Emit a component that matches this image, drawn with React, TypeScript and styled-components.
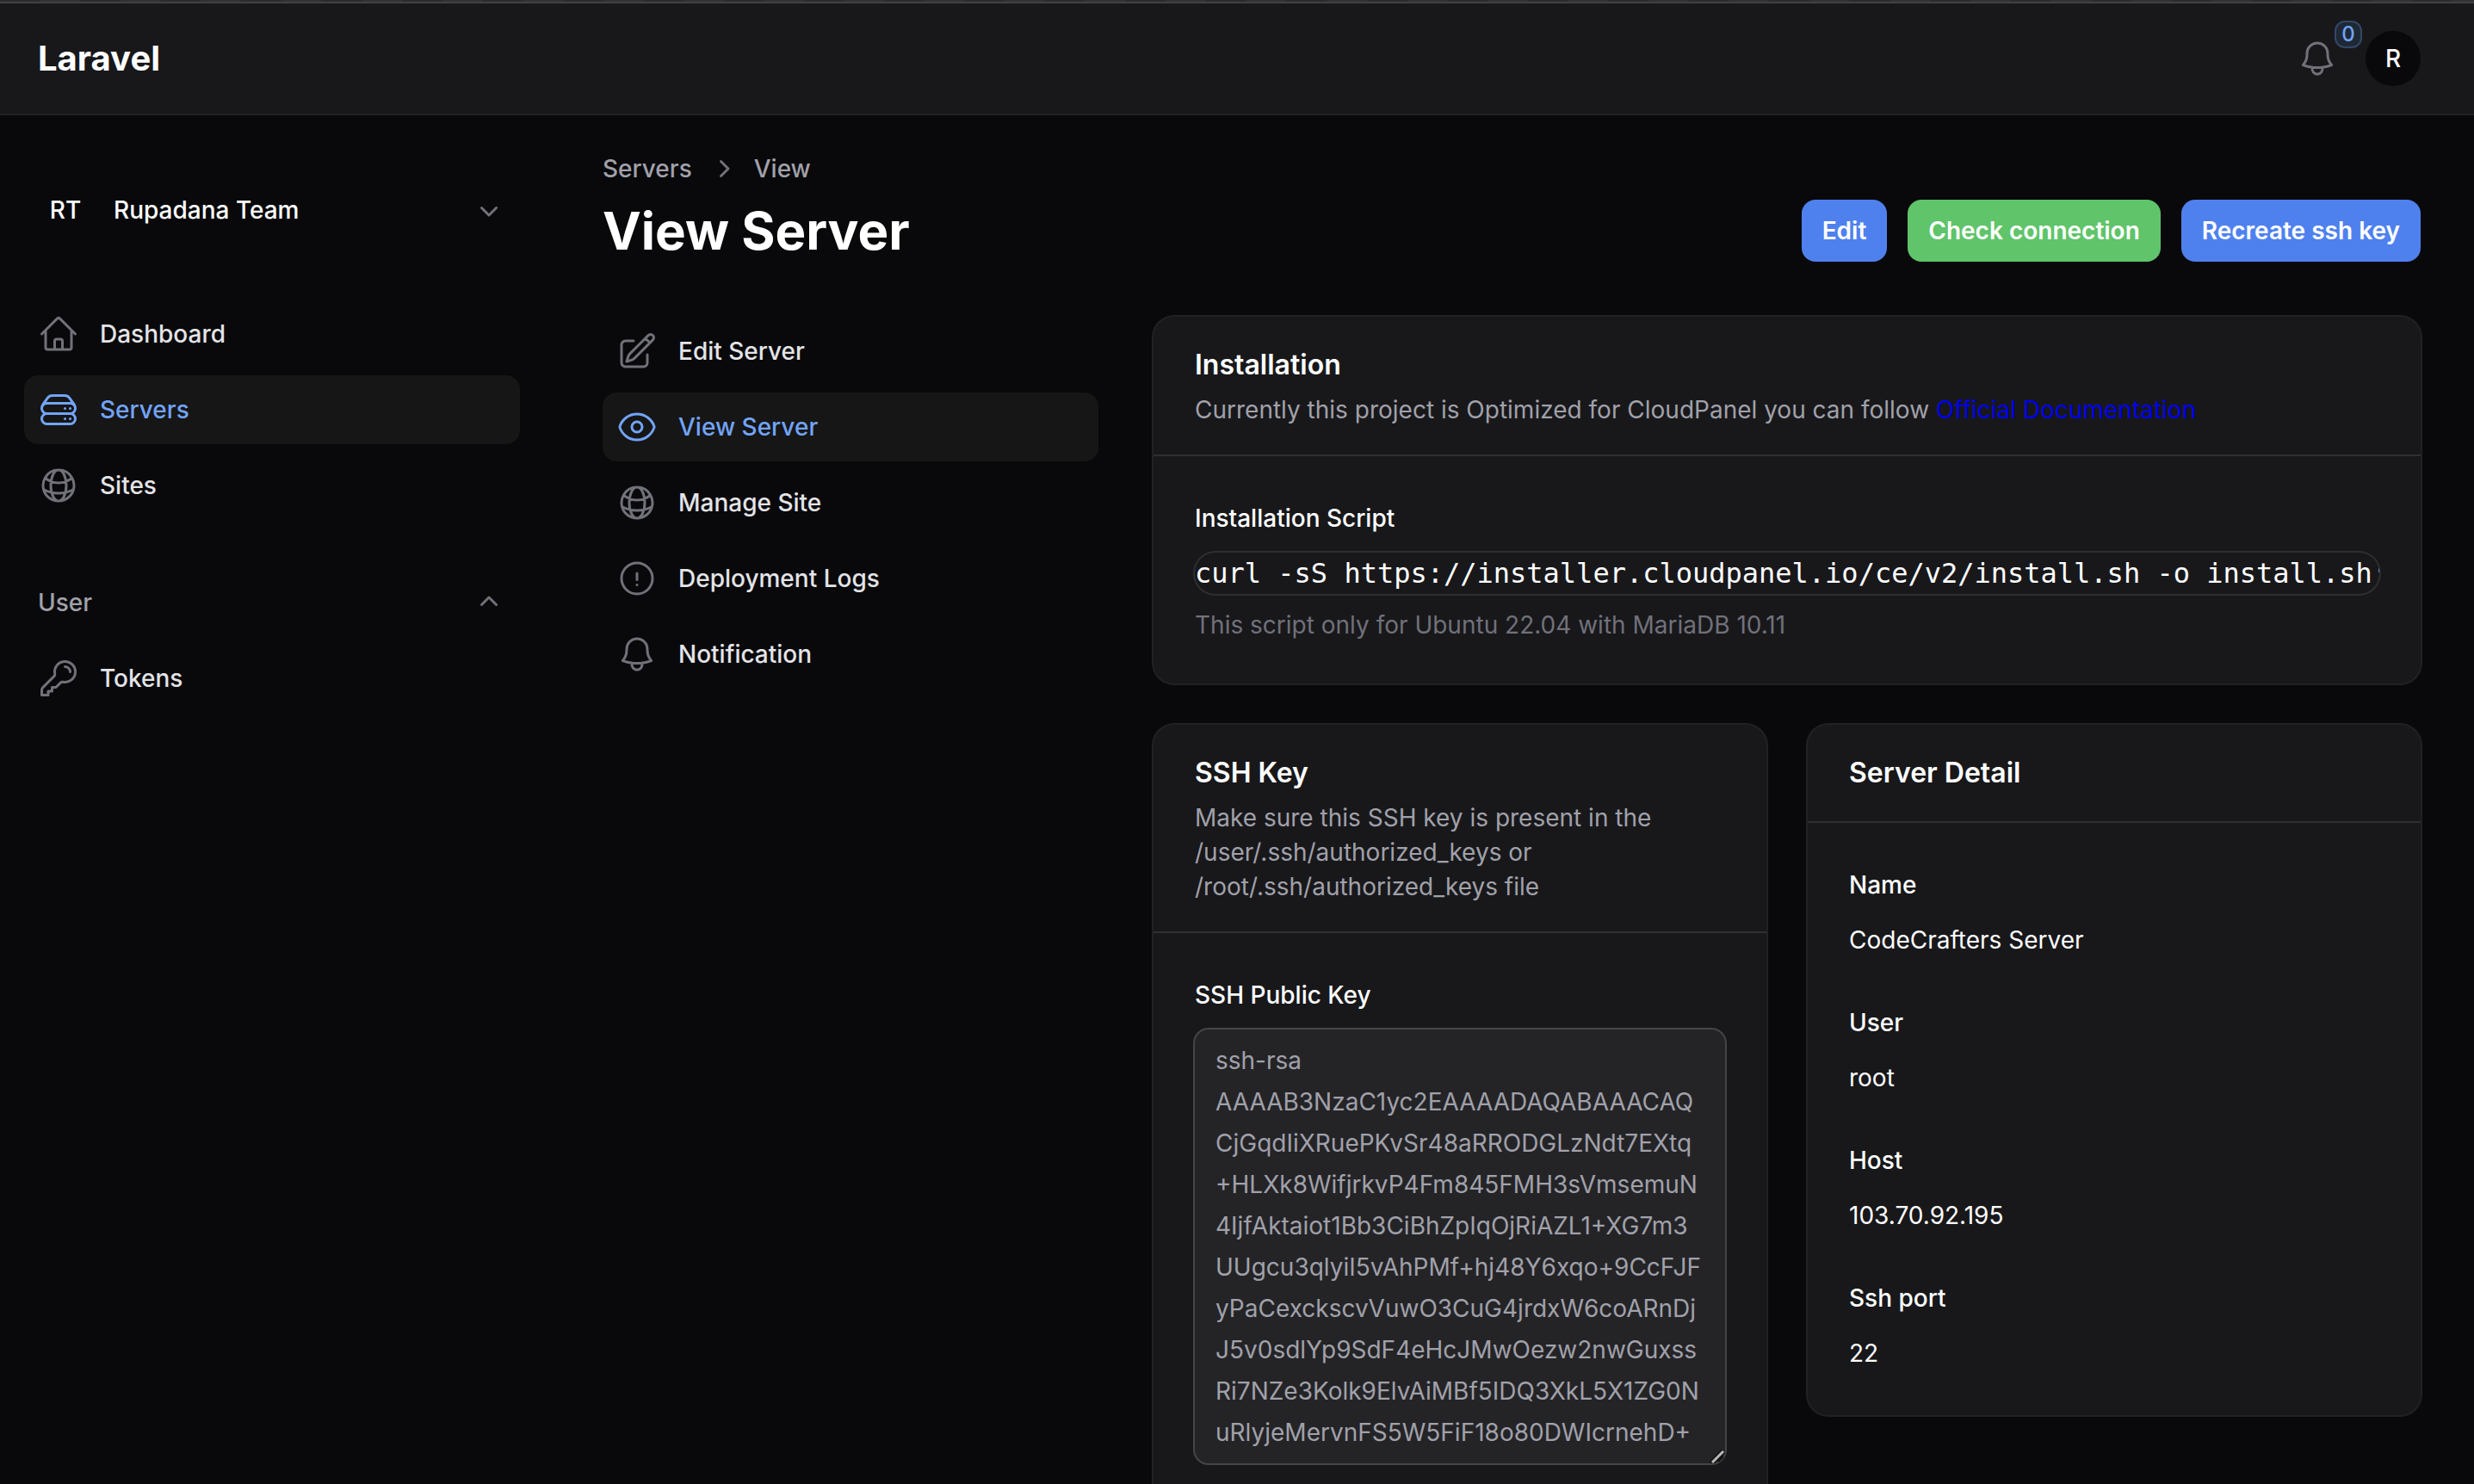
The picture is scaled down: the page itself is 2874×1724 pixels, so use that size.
import React from "react";
import styled, { createGlobalStyle, css } from "styled-components";
import {
  HiMiniChevronDown,
  HiMiniChevronRight,
  HiMiniChevronUp,
  HiOutlineBell,
  HiOutlineExclamationCircle,
  HiOutlineEye,
  HiOutlineGlobeAlt,
  HiOutlineHome,
  HiOutlineKey,
  HiOutlinePencilSquare,
  HiOutlineServerStack,
} from "react-icons/hi2";

const color = {
  page: "#09090b",
  surface: "#18181b",
  ring: "#212124",
  line: "#2f2f32",
  text: "#ffffff",
  navText: "#e4e4e7",
  muted: "#a1a1aa",
  dim: "#71717a",
  active: "#161616",
  accent: "#72a4f7",
  primary: "#4f81ee",
  success: "#5fc46a",
};

const Global = createGlobalStyle`
  *, *::before, *::after { box-sizing: border-box; }
  body {
    margin: 0;
    background: ${color.page};
    color: ${color.text};
    font-family: Inter, "Noto Sans", sans-serif;
    font-size: 28px;
    line-height: 40px;
    font-optical-sizing: none;
    -webkit-font-smoothing: antialiased;
  }
  h1, h2, p, ul, ol, dl, dd { margin: 0; padding: 0; }
  ul, ol { list-style: none; }
  a { color: inherit; text-decoration: none; }
  button, textarea { font: inherit; color: inherit; border: 0; background: none; padding: 0; margin: 0; }
  button { cursor: pointer; }
  svg { display: block; flex: none; }
`;

const Shell = styled.div`
  display: flex;
  flex-direction: column;
  height: 100vh;
  overflow: hidden;
`;

const Strip = styled.div`
  flex: none;
  height: 4px;
  border-bottom: 2px solid #414141;
  background: repeating-linear-gradient(80deg, #2b2b2b 0 46px, #323232 46px 92px);
`;

const Topbar = styled.header`
  flex: none;
  display: flex;
  align-items: center;
  justify-content: space-between;
  height: 130px;
  padding: 0 62px 0 44px;
  background: ${color.surface};
  border-bottom: 2px solid ${color.ring};
`;

const Brand = styled.a`
  font-size: 40px;
  font-weight: 700;
  font-optical-sizing: auto;
`;

const TopActions = styled.div`
  display: flex;
  align-items: center;
  gap: 32px;
`;

const BellButton = styled.button`
  position: relative;
  color: ${color.dim};
`;

const Badge = styled.span`
  position: absolute;
  left: 44px;
  bottom: 36px;
  width: 32px;
  height: 32px;
  border: 2px solid #334767;
  border-radius: 12px;
  background: #1f2935;
  color: ${color.accent};
  font-size: 24px;
  font-weight: 500;
  line-height: 28px;
  text-align: center;
`;

const Avatar = styled.span`
  display: flex;
  align-items: center;
  justify-content: center;
  width: 64px;
  height: 64px;
  border-radius: 50%;
  background: ${color.page};
  font-weight: 500;
`;

const Body = styled.div`
  flex: 1;
  min-height: 0;
  display: flex;
`;

const Sidebar = styled.nav`
  flex: none;
  width: 636px;
  padding: 62px 32px 0 28px;
  display: flex;
  flex-direction: column;
  gap: 56px;
`;

const TeamButton = styled.button`
  display: flex;
  align-items: center;
  gap: 24px;
  padding: 16px;
  font-weight: 500;
  text-align: left;
`;

const TeamName = styled.span`
  flex: 1;
`;

const Chevron = styled.span`
  color: ${color.dim};
`;

const NavList = styled.ul`
  display: flex;
  flex-direction: column;
  gap: 8px;
`;

const NavLink = styled.a<{ $active?: boolean }>`
  display: flex;
  align-items: center;
  gap: 24px;
  height: 80px;
  padding: 16px;
  border-radius: 16px;
  font-weight: 500;
  color: ${color.navText};

  svg {
    color: ${color.dim};
  }

  ${(p) =>
    p.$active &&
    css`
      background: ${color.active};
      &, svg {
        color: ${color.accent};
      }
    `}
`;

const NavGroup = styled.section`
  display: flex;
  flex-direction: column;
  gap: 8px;
`;

const GroupButton = styled.button`
  display: flex;
  align-items: center;
  justify-content: space-between;
  height: 80px;
  padding: 16px;
  font-weight: 500;
  color: ${color.muted};
`;

const Main = styled.main`
  flex: 1;
  min-width: 0;
  overflow: auto;
  scrollbar-width: none;
  display: flex;
  flex-direction: column;
  gap: 64px;
  padding: 42px 62px 64px 64px;
`;

const PageHeader = styled.header`
  display: flex;
  align-items: flex-end;
  justify-content: space-between;
`;

const Breadcrumbs = styled.ol`
  display: flex;
  align-items: center;
  gap: 16px;
  margin-bottom: 16px;
  font-weight: 500;
  color: ${color.muted};
`;

const Title = styled.h1`
  font-size: 60px;
  line-height: 72px;
  font-weight: 700;
  font-optical-sizing: auto;
`;

const Actions = styled.div`
  display: flex;
  gap: 24px;
`;

const ActionButton = styled.button<{ $tone: "primary" | "success" }>`
  padding: 16px 24px;
  border-radius: 16px;
  font-weight: 600;
  background: ${(p) => color[p.$tone]};
`;

const Columns = styled.div`
  display: grid;
  grid-template-columns: 576px minmax(0, 1fr);
  gap: 64px;
  align-items: start;
`;

const Cards = styled.div`
  display: grid;
  grid-template-columns: repeat(2, minmax(0, 1fr));
  gap: 48px;
  align-items: start;
`;

const Card = styled.section<{ $wide?: boolean }>`
  grid-column: ${(p) => (p.$wide ? "1 / -1" : "auto")};
  border-radius: 24px;
  background: ${color.surface};
  box-shadow: 0 0 0 2px ${color.ring};
`;

const CardHeader = styled.header`
  display: flex;
  flex-direction: column;
  gap: 8px;
  padding: 32px 48px;
`;

const CardTitle = styled.h2`
  font-size: 32px;
  line-height: 48px;
  font-weight: 600;
`;

const CardText = styled.p`
  color: ${color.muted};
`;

const DocLink = styled.a`
  color: #0000ee;
`;

const CardBody = styled.div`
  display: flex;
  flex-direction: column;
  gap: 16px;
  padding: 48px;
  border-top: 2px solid ${color.line};
`;

const fieldLabel = css`
  font-weight: 500;
  line-height: 48px;
`;

const FieldTitle = styled.span`
  ${fieldLabel}
`;

const FieldLabel = styled.label`
  ${fieldLabel}
`;

const Script = styled.code`
  overflow-x: auto;
  overflow-y: hidden;
  scrollbar-width: none;
  border-radius: 24px;
  box-shadow: 0 0 0 2px ${color.line};
  font-family: "DejaVu Sans Mono", "Liberation Mono", monospace;
  font-size: 32px;
  line-height: 48px;
  white-space: nowrap;
`;

const Hint = styled.p`
  color: ${color.dim};
`;

const KeyBox = styled.div`
  position: relative;
  display: flex;
  border-radius: 16px;
  background: #242427;
  box-shadow: 0 0 0 2px #454547;
`;

const KeyText = styled.textarea`
  flex: 1;
  min-width: 0;
  padding: 12px 24px;
  color: ${color.muted};
  line-height: 48px;
  resize: none;
  overflow: hidden;
  outline: none;
  word-break: break-all;
`;

const Grip = styled.svg`
  position: absolute;
  right: 0;
  bottom: 0;
`;

const Details = styled.dl`
  display: flex;
  flex-direction: column;
  gap: 48px;
  padding: 48px;
  border-top: 2px solid ${color.line};
  line-height: 48px;
`;

const Detail = styled.div`
  display: flex;
  flex-direction: column;
  gap: 16px;
`;

const DetailName = styled.dt`
  font-weight: 500;
`;

const ICON = 48;
const SMALL_ICON = 40;

const mainNav = [
  { label: "Dashboard", Icon: HiOutlineHome },
  { label: "Servers", Icon: HiOutlineServerStack, active: true },
  { label: "Sites", Icon: HiOutlineGlobeAlt },
];

const userNav = [{ label: "Tokens", Icon: HiOutlineKey }];

const serverNav = [
  { label: "Edit Server", Icon: HiOutlinePencilSquare },
  { label: "View Server", Icon: HiOutlineEye, active: true },
  { label: "Manage Site", Icon: HiOutlineGlobeAlt },
  { label: "Deployment Logs", Icon: HiOutlineExclamationCircle },
  { label: "Notification", Icon: HiOutlineBell },
];

const details = [
  ["Name", "CodeCrafters Server"],
  ["User", "root"],
  ["Host", "103.70.92.195"],
  ["Ssh port", "22"],
];

const publicKey = [
  "ssh-rsa",
  "AAAAB3NzaC1yc2EAAAADAQABAAACAQ",
  "CjGqdIiXRuePKvSr48aRRODGLzNdt7EXtq",
  "+HLXk8WifjrkvP4Fm845FMH3sVmsemuN",
  "4IjfAktaiot1Bb3CiBhZpIqOjRiAZL1+XG7m3",
  "UUgcu3qlyiI5vAhPMf+hj48Y6xqo+9CcFJF",
  "yPaCexckscvVuwO3CuG4jrdxW6coARnDj",
  "J5v0sdlYp9SdF4eHcJMwOezw2nwGuxss",
  "Ri7NZe3Kolk9ElvAiMBf5IDQ3XkL5X1ZG0N",
  "uRlyjeMervnFS5W5FiF18o80DWIcrnehD+",
].join("\n");

type Item = { label: string; Icon: React.ComponentType<{ size?: number }>; active?: boolean };

function Nav({ items }: { items: Item[] }) {
  return (
    <NavList>
      {items.map(({ label, Icon, active }) => (
        <li key={label}>
          <NavLink href="#" $active={active} aria-current={active ? "page" : undefined}>
            <Icon size={ICON} />
            {label}
          </NavLink>
        </li>
      ))}
    </NavList>
  );
}

export default function App() {
  return (
    <Shell>
      <Global />
      <Strip />
      <Topbar>
        <Brand href="#">Laravel</Brand>
        <TopActions>
          <BellButton type="button" aria-label="Notifications">
            <HiOutlineBell size={ICON} />
            <Badge>0</Badge>
          </BellButton>
          <button type="button" aria-label="User menu">
            <Avatar>R</Avatar>
          </button>
        </TopActions>
      </Topbar>
      <Body>
        <Sidebar>
          <TeamButton type="button">
            <Avatar>RT</Avatar>
            <TeamName>Rupadana Team</TeamName>
            <Chevron>
              <HiMiniChevronDown size={SMALL_ICON} />
            </Chevron>
          </TeamButton>
          <Nav items={mainNav} />
          <NavGroup>
            <GroupButton type="button">
              User
              <Chevron>
                <HiMiniChevronUp size={SMALL_ICON} />
              </Chevron>
            </GroupButton>
            <Nav items={userNav} />
          </NavGroup>
        </Sidebar>
        <Main>
          <PageHeader>
            <div>
              <Breadcrumbs>
                <li>
                  <a href="#">Servers</a>
                </li>
                <Chevron as="li" aria-hidden>
                  <HiMiniChevronRight size={SMALL_ICON} />
                </Chevron>
                <li>
                  <a href="#">View</a>
                </li>
              </Breadcrumbs>
              <Title>View Server</Title>
            </div>
            <Actions>
              <ActionButton type="button" $tone="primary">Edit</ActionButton>
              <ActionButton type="button" $tone="success">Check connection</ActionButton>
              <ActionButton type="button" $tone="primary">Recreate ssh key</ActionButton>
            </Actions>
          </PageHeader>
          <Columns>
            <nav>
              <Nav items={serverNav} />
            </nav>
            <Cards>
              <Card $wide>
                <CardHeader>
                  <CardTitle>Installation</CardTitle>
                  <CardText>
                    Currently this project is Optimized for CloudPanel you can follow{" "}
                    <DocLink href="#">Official Documentation</DocLink>
                  </CardText>
                </CardHeader>
                <CardBody>
                  <FieldTitle>Installation Script</FieldTitle>
                  <Script>curl -sS https://installer.cloudpanel.io/ce/v2/install.sh -o install.sh;</Script>
                  <Hint>This script only for Ubuntu 22.04 with MariaDB 10.11</Hint>
                </CardBody>
              </Card>
              <Card>
                <CardHeader>
                  <CardTitle>SSH Key</CardTitle>
                  <CardText>
                    Make sure this SSH key is present in the /user/.ssh/authorized_keys or
                    /root/.ssh/authorized_keys file
                  </CardText>
                </CardHeader>
                <CardBody>
                  <FieldLabel htmlFor="public-key">SSH Public Key</FieldLabel>
                  <KeyBox>
                    <KeyText id="public-key" rows={10} readOnly value={publicKey} />
                    <Grip width="20" height="20" viewBox="0 0 20 20" fill="none" aria-hidden>
                      <path d="M4 20 L18 6" stroke="#111111" strokeWidth="6" />
                      <path d="M5 19 L18 6" stroke="#b8b8b8" strokeWidth="3" />
                      <path d="M12 18 L18 12" stroke="#111111" strokeWidth="2" />
                    </Grip>
                  </KeyBox>
                </CardBody>
              </Card>
              <Card>
                <CardHeader>
                  <CardTitle>Server Detail</CardTitle>
                </CardHeader>
                <Details>
                  {details.map(([name, value]) => (
                    <Detail key={name}>
                      <DetailName>{name}</DetailName>
                      <dd>{value}</dd>
                    </Detail>
                  ))}
                </Details>
              </Card>
            </Cards>
          </Columns>
        </Main>
      </Body>
    </Shell>
  );
}
